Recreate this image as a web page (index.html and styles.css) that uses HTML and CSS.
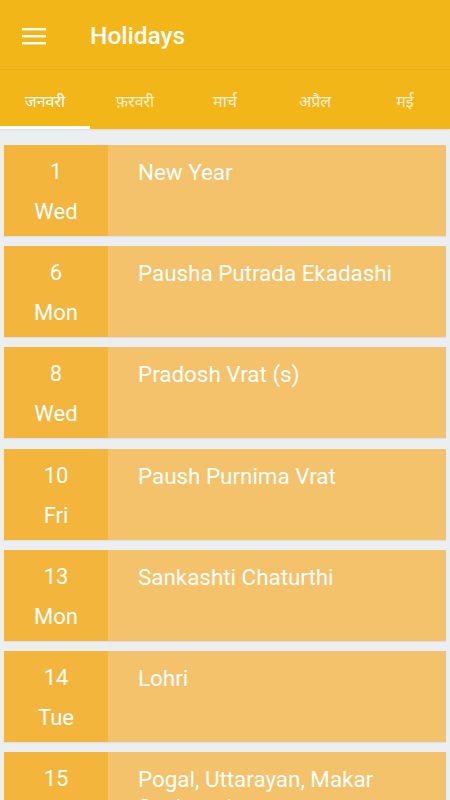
FILE: index.html
```html
<!DOCTYPE html>
<html lang="hi">
<head>
    <meta charset="UTF-8">
    <meta name="viewport" content="width=device-width, initial-scale=1.0">
    <title>Holidays</title>
    <link rel="stylesheet" href="styles.css">
</head>
<body>

    <header class="app-bar">
        <svg class="menu-icon" width="24" height="24" viewBox="0 0 24 24">
            <rect x="0" y="4" width="24" height="2.4" fill="#fff"/>
            <rect x="0" y="11" width="24" height="2.4" fill="#fff"/>
            <rect x="0" y="18" width="24" height="2.4" fill="#fff"/>
        </svg>
        <h1>Holidays</h1>
    </header>

    <nav class="tabs">
        <div class="tab active">जनवरी</div>
        <div class="tab">फ़रवरी</div>
        <div class="tab">मार्च</div>
        <div class="tab">अप्रैल</div>
        <div class="tab">मई</div>
    </nav>

    <main class="list">
        <div class="card">
            <div class="date"><span>1</span><span>Wed</span></div>
            <div class="title">New Year</div>
        </div>
        <div class="card">
            <div class="date"><span>6</span><span>Mon</span></div>
            <div class="title">Pausha Putrada Ekadashi</div>
        </div>
        <div class="card">
            <div class="date"><span>8</span><span>Wed</span></div>
            <div class="title">Pradosh Vrat (s)</div>
        </div>
        <div class="card">
            <div class="date"><span>10</span><span>Fri</span></div>
            <div class="title">Paush Purnima Vrat</div>
        </div>
        <div class="card">
            <div class="date"><span>13</span><span>Mon</span></div>
            <div class="title">Sankashti Chaturthi</div>
        </div>
        <div class="card">
            <div class="date"><span>14</span><span>Tue</span></div>
            <div class="title">Lohri</div>
        </div>
        <div class="card">
            <div class="date"><span>15</span><span>Sun</span></div>
            <div class="title">Pogal, Uttarayan, Makar Sankranti</div>
        </div>
    </main>

</body>
</html>
```

FILE: styles.css
```css
body {
    font-family: Roboto, 'Noto Sans', sans-serif;
    margin: 0;
    padding: 0;
    background-color: #ebeff1;
    width: 450px;
    height: 800px;
    overflow: hidden;
}

.app-bar {
    height: 70px;
    background-color: #f3b619;
    display: flex;
    align-items: center;
    padding-left: 22px;
    padding-top: 2px;
    box-sizing: border-box;
    border-bottom: 1px solid #e8ad17;
}

.menu-icon {
    margin-right: 44px;
}

.app-bar h1 {
    margin: 0;
    font-size: 24.5px;
    font-weight: 500;
    color: #fff;
}

.tabs {
    height: 59px;
    background-color: #f3b619;
    display: flex;
    box-shadow: 0 1px 2px rgba(0, 0, 0, 0.08);
}

.tab {
    flex: 1;
    display: flex;
    justify-content: center;
    align-items: center;
    padding-top: 2px;
    font-family: 'Noto Sans', sans-serif;
    font-size: 16px;
    color: #fdf1d4;
    box-sizing: border-box;
}

.tab.active {
    color: #fff;
    border-bottom: 3px solid #fff;
    padding-top: 5px;
}

.list {
    padding: 16px 4px 0 4px;
}

.card {
    display: flex;
    height: 91px;
    margin-bottom: 10.2px;
    background-color: #f3c26a;
    box-shadow: 0 1px 1px rgba(0, 0, 0, 0.06);
}

.date {
    width: 104px;
    flex-shrink: 0;
    background-color: #f3b53b;
    display: flex;
    flex-direction: column;
    align-items: center;
    color: #fff;
    font-size: 22px;
    padding-top: 15px;
    box-sizing: border-box;
    gap: 16px;
    line-height: 24px;
}

.title {
    padding: 13px 24px 0 30px;
    color: #fff;
    font-size: 22.4px;
    line-height: 28px;
}
```
